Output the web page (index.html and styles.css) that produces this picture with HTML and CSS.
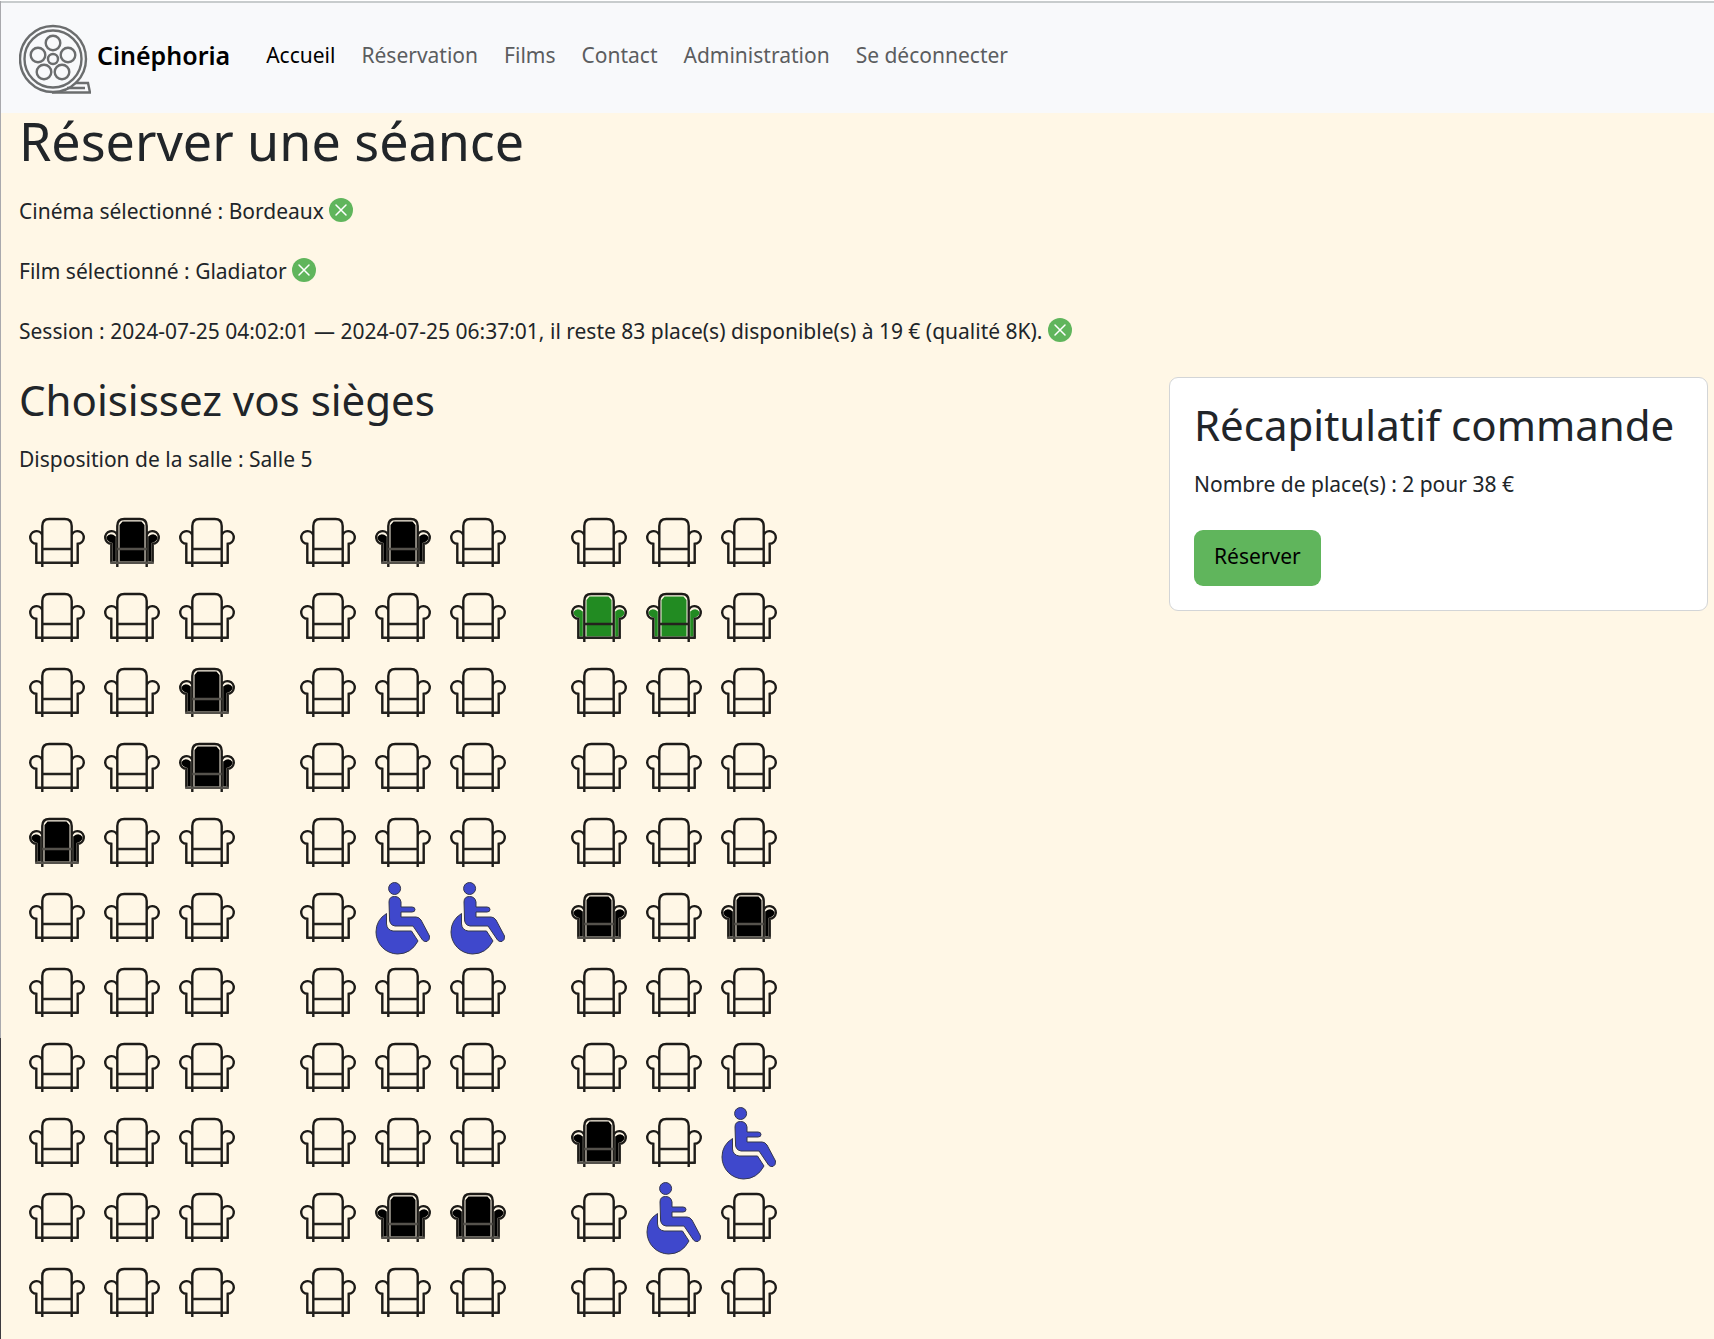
FILE: index.html
```html
<!DOCTYPE html>
<html lang="fr">
<head>
<meta charset="utf-8">
<meta name="viewport" content="width=device-width, initial-scale=1">
<title>Cinéphoria – Réserver une séance</title>
<link rel="stylesheet" href="styles.css">
</head>
<body>
<svg class="sprite" aria-hidden="true">
  <symbol id="seat" viewBox="0 0 75 75">
    <path class="fill" d="M25.500 20L28.500 16.500H47.500L50.500 20V56.500H25.500ZM18.500 56.500V38Q12 36 12.500 32Q16 27 21.800 31.500V56.500ZM57.500 56.500V38Q64 36 63.500 32Q60 27 54.200 31.500V56.500Z"/>
    <path class="line" d="M23.300 62V21Q23.300 14 30.300 14H45.700Q52.700 14 52.700 21V62M23.300 30A6.300 6.300 0 1 0 17.300 38.800V57.700M58.700 57.700V38.800A6.300 6.300 0 1 0 52.700 30"/>
    <path class="rail" d="M23.300 44H52.700M16.200 57.700H59.800"/>
  </symbol>
  <symbol id="wheelchair" viewBox="6 0 75 75">
    <circle cx="35.600" cy="8.500" r="6"/>
    <path d="M30 22Q30 16.500 35.500 16.500T42 22V27H53Q56 27 56 29.500T53 32H42V37H57Q60 37 62 40L70.500 56Q71 60 68 61.500Q65 62 63.500 60L54 46H36Q30 45 30.500 38Z"/>
    <path d="M27.500 33.500V44Q28 50 34 51H52.500L59 61Q52 74 38.500 74A22 22 0 0 1 17 52Q17 40 27.500 33.500Z"/>
  </symbol>
  <symbol id="cross" viewBox="0 0 24 24">
    <circle cx="12" cy="12" r="12" fill="#60b55c"/>
    <path d="M7 7L17 17M17 7L7 17" stroke="#fff" stroke-width="1.500" stroke-linecap="round"/>
  </symbol>
</svg>

<header class="navbar">
  <a class="brand" href="#">
    <svg class="logo" viewBox="0 0 72 72" aria-hidden="true">
      <g fill="none" stroke="#6b6d6e" stroke-width="2.400">
        <circle cx="34" cy="35" r="33"/><circle cx="34" cy="35" r="28.500"/>
        <circle cx="34" cy="35" r="5"/><circle cx="34" cy="19" r="7.300"/>
        <circle cx="19" cy="31" r="7.300"/><circle cx="49" cy="31" r="7.300"/>
        <circle cx="25" cy="48" r="7.300"/><circle cx="43" cy="48" r="7.300"/>
        <path d="M33 68.500H71L69 59H56M48 64H66"/>
      </g>
    </svg>
    <span>Cinéphoria</span>
  </a>
  <nav class="links">
    <a class="active" href="#">Accueil</a>
    <a href="#">Réservation</a>
    <a href="#">Films</a>
    <a href="#">Contact</a>
    <a href="#">Administration</a>
    <a href="#">Se déconnecter</a>
  </nav>
</header>

<main class="page">
  <h1>Réserver une séance</h1>
  <p class="choice">Cinéma sélectionné : Bordeaux <button class="clear" aria-label="Changer de cinéma"><svg><use href="#cross"/></svg></button></p>
  <p class="choice">Film sélectionné : Gladiator <button class="clear" aria-label="Changer de film"><svg><use href="#cross"/></svg></button></p>
  <p class="choice">Session : 2024-07-25 04:02:01 — 2024-07-25 06:37:01, il reste 83 place(s) disponible(s) à 19 € (qualité 8K). <button class="clear" aria-label="Changer de session"><svg><use href="#cross"/></svg></button></p>

  <div class="columns">
    <section class="room">
      <h2>Choisissez vos sièges</h2>
      <p>Disposition de la salle : Salle 5</p>
      <div class="seats" id="seats"></div>
    </section>
    <aside class="card">
      <h2>Récapitulatif commande</h2>
      <p>Nombre de place(s) : 2 pour 38 €</p>
      <button class="book">Réserver</button>
    </aside>
  </div>
</main>
<script src="seats.js"></script>
</body>
</html>
```
FILE: styles.css
```css
* { box-sizing: border-box; }

body {
  margin: 0;
  min-height: 100vh;
  border-top: 1px solid #fff;
  background: linear-gradient(#a9a9ad 1038px, #3d3b40 1038px) left / 1px 100% no-repeat #fff7e6;
  color: #212529;
  font: 21px/36px "Noto Sans", sans-serif;
}

h1, h2, p { margin: 0; font-weight: 400; }
h1 { font-size: 52px; line-height: 56px; }
h2 { margin-bottom: 18px; font-size: 42px; line-height: 46px; }
button { font: inherit; border: 0; cursor: pointer; }
.sprite { display: none; }

.navbar {
  display: flex;
  align-items: center;
  gap: 36px;
  height: 112px;
  margin-left: 1px;
  padding: 4px 18px 0;
  border-top: 2px solid #c8cccd;
  background: #f8f9fb;
}
.brand {
  display: flex;
  align-items: center;
  gap: 6px;
  color: #000;
  font-size: 25px;
  font-weight: 600;
  text-decoration: none;
}
.brand span, .links { padding-bottom: 10px; }
.logo { width: 72px; height: 72px; }
.links { display: flex; gap: 26px; }
.links a { color: #5b5d5f; text-decoration: none; }
.links .active { color: #000; }

.page { padding: 0 6px 0 19px; }
.choice { margin-top: 24px; }
.clear {
  width: 24px;
  height: 24px;
  padding: 0;
  border-radius: 50%;
  background: none;
  vertical-align: -3px;
}
.clear svg { display: block; width: 24px; height: 24px; }

.columns {
  display: flex;
  justify-content: space-between;
  align-items: flex-start;
  margin-top: 28px;
}

.seats { margin-top: 28px; }
.row, .block { display: flex; }
.row { gap: 46px; }
.seat { width: 75px; height: 75px; padding: 0; background: none; }
.seat svg { display: block; width: 75px; height: 75px; }
.line, .rail { fill: none; stroke: #1d1b18; stroke-width: 2.4; }
.rail { stroke: var(--rail, #24221e); }
.fill { fill: var(--fill, none); }
.taken { --fill: #000; --rail: #55524c; }
.chosen { --fill: #228b22; }
.access svg { fill: #3f48cc; stroke: #33364f; stroke-width: 1; }

.card {
  width: 539px;
  padding: 24px;
  border: 1px solid #d3d5d7;
  border-radius: 9px;
  background: #fff;
}
.book {
  display: block;
  height: 56px;
  margin-top: 28px;
  padding: 0 20px 5px;
  border-radius: 9px;
  background: #60b55c;
  color: #000;
}
```
FILE: seats.js
```js
// One character per seat: o free, x taken, s selected, w wheelchair place.
const rows = [
  'oxo oxo ooo',
  'ooo ooo sso',
  'oox ooo ooo',
  'oox ooo ooo',
  'xoo ooo ooo',
  'ooo oww xox',
  'ooo ooo ooo',
  'ooo ooo ooo',
  'ooo ooo xow',
  'ooo oxx owo',
  'ooo ooo ooo'
];
const kinds = {
  o: ['free', 'seat', 'libre'],
  x: ['taken', 'seat', 'occupé'],
  s: ['chosen', 'seat', 'choisi'],
  w: ['access', 'wheelchair', 'PMR']
};
let number = 0;
const seat = (code) => {
  const [name, icon, label] = kinds[code];
  number += 1;
  return `<button class="seat ${name}" aria-label="Siège ${number}, ${label}"><svg><use href="#${icon}"/></svg></button>`;
};
document.getElementById('seats').innerHTML = rows.map((row) =>
  `<div class="row">${row.split(' ').map((block) =>
    `<div class="block">${[...block].map(seat).join('')}</div>`).join('')}</div>`).join('');
```
